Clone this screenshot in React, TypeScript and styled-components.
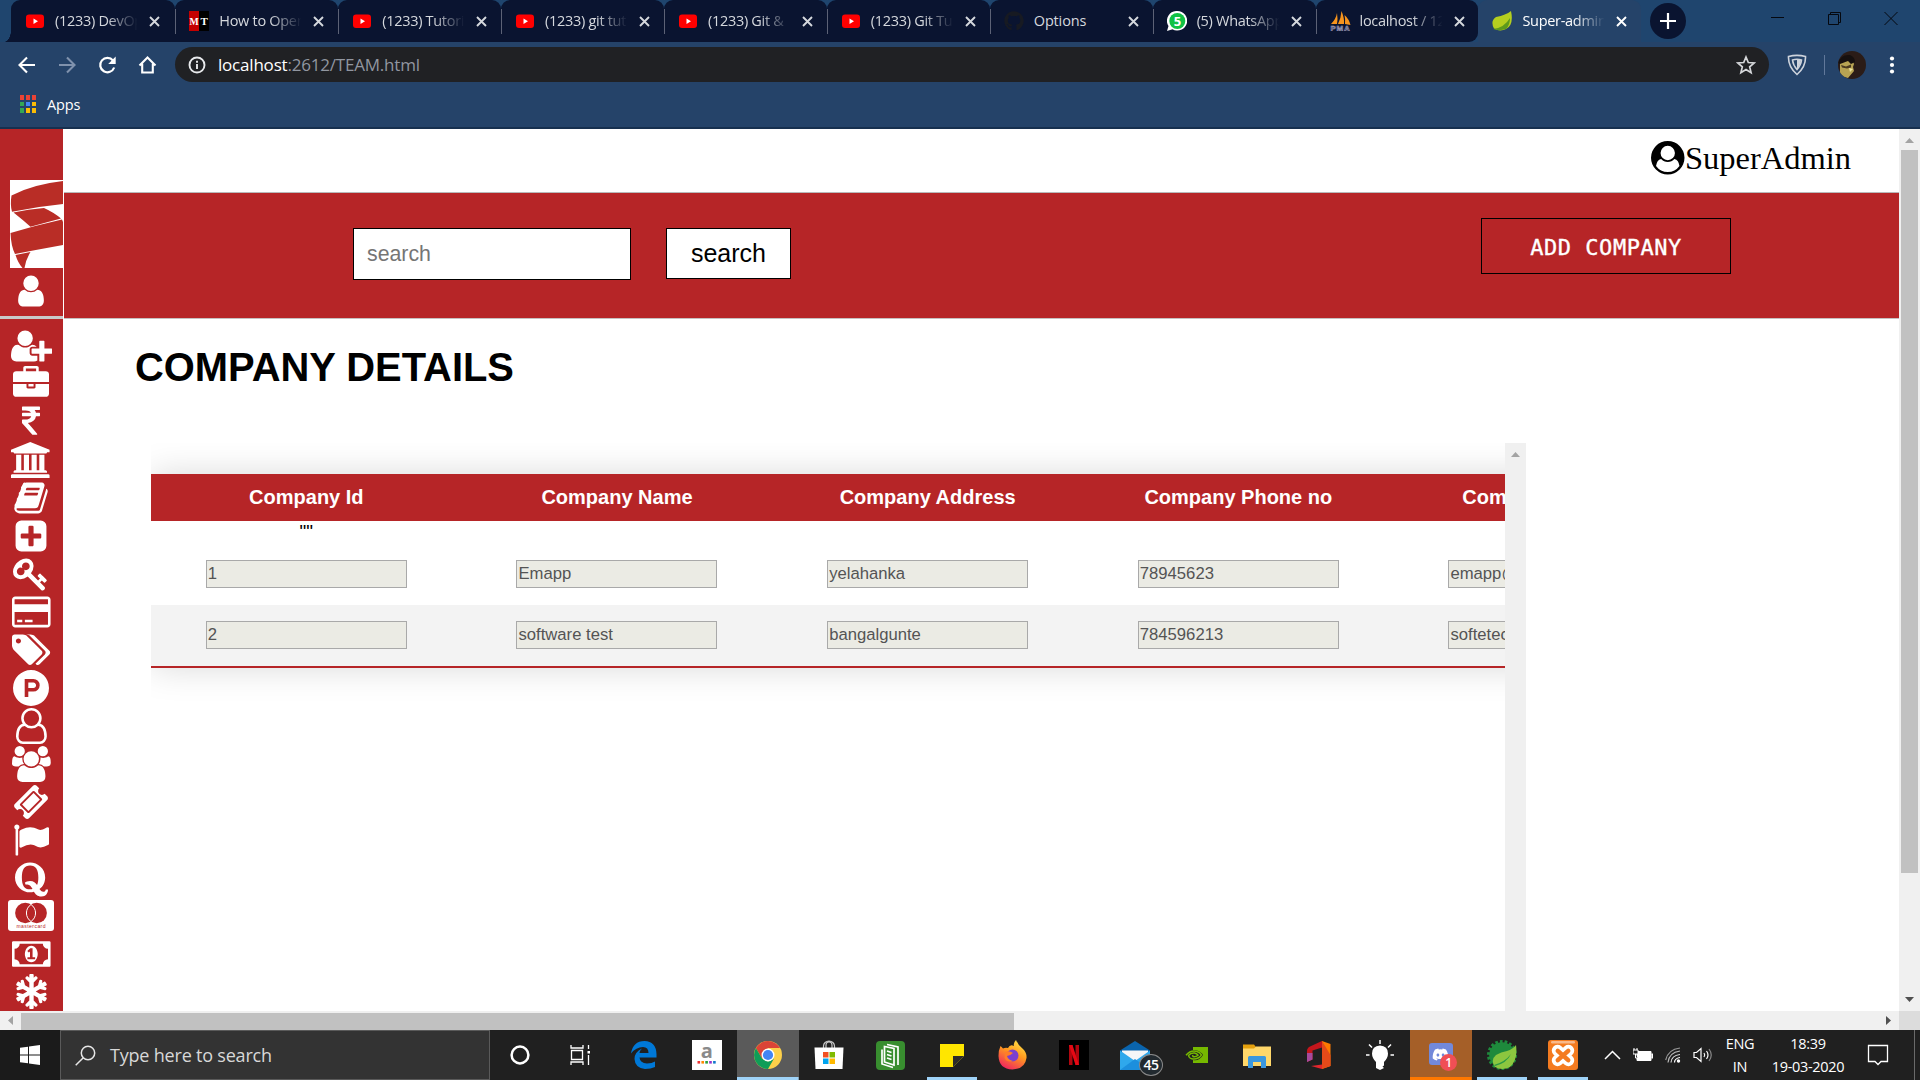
import React from 'react';
import styled, { createGlobalStyle } from 'styled-components';
import { FaQuora, FaSnowflake, FaGithub, FaDiscord } from 'react-icons/fa';

const RED = '#b62527';
const UI = '"Open Sans", "Noto Sans", sans-serif';
const ARIAL = '"Liberation Sans", Arial, sans-serif';

const Global = createGlobalStyle`
  * { box-sizing: border-box; }
  html, body { margin: 0; padding: 0; overflow: hidden; background: #fff; }
  svg { display: block; flex: none; }
`;

const Screen = styled.div`
  width: 1920px;
  height: 1080px;
  display: flex;
  flex-direction: column;
  overflow: hidden;
`;

/* ---------- browser chrome ---------- */
const TabStrip = styled.div`
  height: 42px;
  flex: none;
  display: flex;
  background: #1f456e;
  padding-left: 11px;
`;
const Tab = styled.div<{ $active?: boolean; $first?: boolean; $last?: boolean }>`
  width: ${p => (p.$first ? 164.3 : 162.9)}px;
  height: 42px;
  flex: none;
  display: flex;
  align-items: center;
  padding-left: 14px;
  position: relative;
  border-radius: ${p => (p.$last ? '9px 9px 9px 0' : '9px 9px 0 0')};
  background: ${p => (p.$active ? '#254369' : '#0a1430')};
  font: 14.5px ${UI};
  letter-spacing: -0.3px;
  color: ${p => (p.$active ? '#fff' : '#d5d8dd')};
  &::before {
    content: '';
    position: absolute;
    left: ${p => (p.$first ? '-7px' : '0')};
    bottom: ${p => (p.$first ? '0' : '8px')};
    width: ${p => (p.$first ? '7px' : p.$active ? '0' : '1px')};
    height: ${p => (p.$first ? '12px' : '25px')};
    background: ${p => (p.$first ? 'radial-gradient(ellipse at 0 0, transparent 0 68%, #0a1430 72%)' : '#5c6276')};
  }
`;
const Favicon = styled.span`
  width: 20px;
  height: 20px;
  margin-right: 10px;
  display: flex;
  align-items: center;
  flex: none;
`;
const TabLabel = styled.span`
  width: 86px;
  line-height: 20px;
  overflow: hidden;
  white-space: nowrap;
  mask-image: linear-gradient(to right, #000 60%, transparent 96%);
`;
const WideLabel = styled(TabLabel)`
  mask-image: none;
  letter-spacing: -0.15px;
`;
const CloseSlot = styled.span`
  margin-left: 8px;
`;
const NewTab = styled.div`
  width: 36px;
  height: 36px;
  margin: 3px 0 0 9px;
  border-radius: 50%;
  background: #0a1430;
  display: grid;
  place-items: center;
`;
const WindowButtons = styled.div`
  display: flex;
  margin-left: auto;
  padding: 9px 20px 0 0;
`;
const WindowButton = styled.div<{ $w: number }>`
  width: ${p => p.$w}px;
`;
const Toolbar = styled.div`
  height: 46px;
  flex: none;
  display: flex;
  align-items: center;
  background: #254369;
  padding: 0 0 1px 17px;
`;
const NavIcons = styled.div`
  width: 158px;
  display: flex;
  gap: 20px;
`;
const Omnibox = styled.div`
  width: 1594px;
  height: 35px;
  border-radius: 18px;
  background: #202124;
  display: flex;
  align-items: center;
  padding: 0 13px 0 13px;
  font: 17px ${UI};
  letter-spacing: -0.2px;
  color: #9196a0;
`;
const UrlText = styled.span`
  margin-left: 12px;
  flex: 1;
  line-height: 35px;
  b { font-weight: 400; color: #fff; }
`;
const ToolbarRight = styled.div`
  display: flex;
  align-items: center;
  padding-left: 18px;
`;
const Divider = styled.div`
  width: 1px;
  height: 20px;
  margin: 0 13px 0 17px;
  background: #61789a;
`;
const Bookmarks = styled.div`
  height: 41px;
  flex: none;
  display: flex;
  align-items: center;
  gap: 11px;
  padding: 0 0 7px 20px;
  background: #254369;
  border-bottom: 2px solid #17304f;
  font: 14.5px ${UI};
  letter-spacing: -0.15px;
  color: #fff;
`;
const AppGrid = styled.div`
  display: grid;
  grid-template-columns: repeat(3, 4px);
  gap: 2px;
`;
const Dot = styled.i<{ $c: string }>`
  height: 4.5px;
  background: ${p => p.$c};
`;

/* ---------- page ---------- */
const Viewport = styled.div`
  height: 882px;
  flex: none;
  display: flex;
  background: #fff;
  overflow: hidden;
`;
const Side = styled.div`
  width: 63px;
  flex: none;
  background: ${RED};
  display: flex;
  flex-direction: column;
  align-items: center;
`;
const LogoBox = styled.div`
  align-self: flex-end;
  margin: 51px 0 5px;
`;
const SideRule = styled.div`
  width: 63px;
  height: 3px;
  margin: 7px 0 9px;
  flex: none;
  background: #c9c9c9;
`;
const IconList = styled.div`
  display: flex;
  flex-direction: column;
  align-items: center;
  gap: 2px;
`;
const IconSlot = styled.div<{ $shift?: number }>`
  height: 36px;
  display: flex;
  justify-content: center;
  margin-right: ${p => p.$shift || 0}px;
  color: #fff;
`;
const Main = styled.div`
  flex: 1;
  min-width: 0;
  display: flex;
  flex-direction: column;
  padding-left: 1px;
`;
const UserBar = styled.div`
  height: 64px;
  flex: none;
  border-bottom: 1px solid #b9b9b9;
  display: flex;
  justify-content: flex-end;
  align-items: flex-start;
  padding: 11px 48px 0 0;
  font: 32.5px/36px "Liberation Serif", "Times New Roman", serif;
  color: #000;
  svg { margin-top: 1px; }
`;
const SearchBand = styled.div`
  height: 126px;
  flex: none;
  display: flex;
  align-items: flex-start;
  background: ${RED};
  border-bottom: 1px solid #c6c0c0;
  padding: 25px 168px 0 289px;
`;
const SearchInput = styled.input`
  width: 278px;
  height: 52px;
  margin-top: 10px;
  padding: 0 13px;
  border: 1px solid #000;
  background: #fff;
  font: 21.3px ${ARIAL};
  &::placeholder { color: #757575; }
`;
const SearchButton = styled.button`
  width: 125px;
  height: 51px;
  margin: 10px auto 0 35px;
  padding: 0;
  border: 1px solid #000;
  background: #fff;
  font: 25px ${ARIAL};
  color: #000;
`;
const AddButton = styled.button`
  width: 250px;
  height: 56px;
  padding: 2px 0 0;
  border: 1px solid #000;
  background: transparent;
  color: #fff;
  font: 22px "DejaVu Sans Mono", monospace;
  letter-spacing: 0.55px;
  -webkit-text-stroke: 0.35px #fff;
`;
const Title = styled.h1`
  margin: 25px 0 53px 71px;
  font: bold 39.9px/46px ${ARIAL};
  color: #000;
`;
const TableArea = styled.div`
  width: 1375px;
  flex: 1;
  margin-left: 87px;
  display: flex;
  min-height: 0;
`;
const TableClip = styled.div`
  width: 1354px;
  overflow: hidden;
  padding-top: 31px;
`;
const Table = styled.table`
  width: 1864px;
  table-layout: fixed;
  border-collapse: separate;
  border-spacing: 0;
  border-bottom: 2px solid ${RED};
  box-shadow: 0 0 33px rgba(0, 0, 0, 0.15);
  font-family: ${ARIAL};
`;
const Th = styled.th`
  height: 47px;
  padding: 0;
  background: ${RED};
  color: #fff;
  font-size: 20px;
`;
const Quote = styled.td`
  height: 22px;
  padding: 0;
  text-align: center;
  vertical-align: top;
  font: 19px/21px ${ARIAL};
`;
const Td = styled.td<{ $even: boolean }>`
  height: ${p => (p.$even ? 61 : 62)}px;
  padding: ${p => (p.$even ? 16 : 17)}px 0 0;
  vertical-align: top;
  background: ${p => (p.$even ? '#f3f3f3' : 'transparent')};
`;
const Field = styled.input`
  display: block;
  width: 201px;
  height: 28px;
  margin: 0 auto;
  padding: 0 1px;
  border: 1px solid #a9a9a9;
  background: #ebebe4;
  color: #545454;
  font: 16.67px ${ARIAL};
`;
const InnerScroll = styled.div`
  width: 21px;
  background: #f0f0f0;
  display: flex;
  justify-content: center;
  padding-top: 9px;
`;
const VScroll = styled.div`
  width: 21px;
  flex: none;
  background: #f0f0f0;
  display: flex;
  flex-direction: column;
  align-items: center;
  padding: 9px 0;
`;
const VThumb = styled.div`
  width: 17px;
  height: 723px;
  margin: 7px 0 auto;
  background: #c1c1c1;
`;
const HScroll = styled.div`
  height: 19px;
  flex: none;
  display: flex;
  align-items: center;
  background: #f0f0f0;
  padding-left: 8px;
`;
const HThumb = styled.div`
  width: 993px;
  height: 17px;
  margin: 2px auto 0 8px;
  background: #c1c1c1;
`;
const Corner = styled.div`
  width: 21px;
  height: 19px;
  margin-left: 8px;
  background: #dcdcdc;
`;
const Arrow = styled.i<{ $d: 'up' | 'down' | 'left' | 'right'; $c?: string }>`
  flex: none;
  width: ${p => (p.$d === 'up' || p.$d === 'down' ? 9 : 5)}px;
  height: ${p => (p.$d === 'up' || p.$d === 'down' ? 5 : 9)}px;
  background: ${p => p.$c || '#a3a3a3'};
  clip-path: ${p =>
    ({
      up: 'polygon(50% 0, 100% 100%, 0 100%)',
      down: 'polygon(0 0, 100% 0, 50% 100%)',
      left: 'polygon(100% 0, 100% 100%, 0 50%)',
      right: 'polygon(0 0, 100% 50%, 0 100%)',
    })[p.$d]};
`;

/* ---------- taskbar ---------- */
const Taskbar = styled.div`
  height: 50px;
  flex: none;
  display: flex;
  background: #202020;
  color: #fff;
  font-family: ${UI};
`;
const StartCell = styled.div`
  width: 60px;
  display: grid;
  place-items: center;
  background: #1b1b1b;
`;
const SearchBox = styled.div`
  width: 430px;
  display: flex;
  align-items: center;
  gap: 14px;
  padding-left: 14px;
  background: #333;
  border: 1px solid #5a5a5a;
  font-size: 18px;
  letter-spacing: -0.2px;
  color: #d8d8d8;
`;
const Cell = styled.div<{ $w?: number; $bg?: string; $line?: string; $inset?: number; $right?: number }>`
  width: ${p => p.$w || 61.2}px;
  margin-right: ${p => p.$right || 0}px;
  flex: none;
  display: grid;
  place-items: center;
  background-color: ${p => p.$bg || 'transparent'};
  background-image: ${p => (p.$line ? `linear-gradient(${p.$line}, ${p.$line})` : 'none')};
  background-repeat: no-repeat;
  background-position: center bottom;
  background-size: calc(100% - ${p => (p.$inset || 0) * 2}px) 3px;
`;
const BadgeHost = styled.div`
  position: relative;
  display: grid;
`;
const Badge = styled.span<{ $discord?: boolean }>`
  position: absolute;
  left: ${p => (p.$discord ? 11 : 19)}px;
  top: ${p => (p.$discord ? 11 : 13)}px;
  width: ${p => (p.$discord ? 17 : 24)}px;
  height: ${p => (p.$discord ? 17 : 22)}px;
  border-radius: 50%;
  border: ${p => (p.$discord ? 'none' : '1px solid #8b8b8b')};
  background: ${p => (p.$discord ? '#f04f55' : '#222a30')};
  display: grid;
  place-items: center;
  font-size: ${p => (p.$discord ? 12 : 14)}px;
  font-weight: 600;
  line-height: 1;
  letter-spacing: -0.4px;
`;
const Amazon = styled.div`
  width: 30px;
  height: 30px;
  background: #fff;
  color: #8a8a8a;
  display: flex;
  flex-direction: column;
  align-items: center;
  font: bold 20px/20px ${UI};
  padding-top: 1px;
`;
const Tray = styled.div`
  flex: 1;
  display: flex;
  align-items: center;
  padding-left: 10px;
`;
const TrayIcons = styled.div`
  width: 115px;
  display: flex;
  align-items: center;
  gap: 12px;
`;
const TrayText = styled.div<{ $w: number }>`
  width: ${p => p.$w}px;
  text-align: center;
  font-size: 14.5px;
  line-height: 23px;
  letter-spacing: -0.3px;
  white-space: nowrap;
`;
const Desktop = styled.div`
  margin-left: auto;
  width: 6px;
  height: 50px;
  border-left: 1px solid #6a6a6a;
`;

/* ---------- drawings ---------- */
const G = ({ d, w = 1792, x = 0, size = 36 }: { d: string; w?: number; x?: number; size?: number }) => (
  <svg height={size} width={(w / 1792) * size} viewBox={`${x} 0 ${w} 1792`} fill="currentColor">
    <path d={d} />
  </svg>
);

const P_USER = 'M1536 1399q0 109-62.5 187t-150.5 78h-854q-88 0-150.5-78t-62.5-187q0-85 8.5-160.5t31.5-152 58.5-131 94-89 134.5-34.5q131 128 313 128t313-128q76 0 134.5 34.5t94 89 58.5 131 31.5 152 8.5 160.5zm-256-887q0 159-112.5 271.5t-271.5 112.5-271.5-112.5-112.5-271.5 112.5-271.5 271.5-112.5 271.5 112.5 112.5 271.5z';
const P_CIRCLE_USER = 'M1523 1339q-22-155-87.5-257.5t-184.5-118.5q-67 74-159.5 115.5t-195.5 41.5-195.5-41.5-159.5-115.5q-119 16-184.5 118.5t-87.5 257.5q106 150 271 237.5t356 87.5 356-87.5 271-237.5zm-243-699q0-159-112.5-271.5t-271.5-112.5-271.5 112.5-112.5 271.5 112.5 271.5 271.5 112.5 271.5-112.5 112.5-271.5zm512 256q0 182-71 347.5t-190.5 286-285.5 191.5-349 71q-182 0-348-71t-286-191-191-286-71-348 71-348 191-286 286-191 348-71 348 71 286 191 191 286 71 348z';

type SideGlyph = { d: string; w?: number; x?: number; shift?: number };
const GLYPHS: SideGlyph[] = [
  { w: 2048, d: 'M704 896q-159 0-271.5-112.5t-112.5-271.5 112.5-271.5 271.5-112.5 271.5 112.5 112.5 271.5-112.5 271.5-271.5 112.5zm960 128h352q13 0 22.5 9.5t9.5 22.5v192q0 13-9.5 22.5t-22.5 9.5h-352v352q0 13-9.5 22.5t-22.5 9.5h-192q-13 0-22.5-9.5t-9.5-22.5v-352h-352q-13 0-22.5-9.5t-9.5-22.5v-192q0-13 9.5-22.5t22.5-9.5h352v-352q0-13 9.5-22.5t22.5-9.5h192q13 0 22.5 9.5t9.5 22.5v352zm-736 224q0 52 38 90t90 38h256v238q-68 50-171 50h-874q-121 0-194-69t-73-190q0-53 3.5-103.5t14-109 26.5-108.5 43-97.5 62-81 85.5-53.5 111.5-20q19 0 39 17 79 61 154.5 91.5t164.5 30.5 164.5-30.5 154.5-91.5q20-17 39-17 132 0 217 96h-223q-52 0-90 38t-38 90v192z' },
  { shift: 1, d: 'M640 256h512v-128h-512v128zm1152 640v480q0 66-47 113t-113 47h-1472q-66 0-113-47t-47-113v-480h672v160q0 26 19 45t45 19h320q26 0 45-19t19-45v-160h672zm-768 0v128h-256v-128h256zm768-480v384h-1792v-384q0-66 47-113t113-47h352v-160q0-40 28-68t68-28h576q40 0 68 28t28 68v160h352q66 0 113 47t47 113z' },
  { shift: 1, d: 'M1345 470v102q0 14-9 23t-23 9h-168q-23 144-129 234t-276 110q167 178 459 536 14 16 4 34-8 18-29 18h-195q-16 0-25-12-306-367-498-571-9-9-9-22v-127q0-13 9.5-22.5t22.5-9.5h112q132 0 212.5-43t102.5-125h-427q-14 0-23-9t-9-23v-102q0-14 9-23t23-9h413q-57-113-268-113h-145q-13 0-22.5-9.5t-9.5-22.5v-133q0-14 9-23t23-9h832q14 0 23 9t9 23v102q0 14-9 23t-23 9h-233q47 61 64 144h171q14 0 23 9t9 23z' },
  { w: 1920, x: -128, shift: 2, d: 'M832 0l960 384v128h-128q0 26-20.5 45t-48.5 19h-1526q-28 0-48.5-19t-20.5-45h-128v-128zm-704 640h256v768h128v-768h256v768h128v-768h256v768h128v-768h256v768h59q28 0 48.5 19t20.5 45v64h-1664v-64q0-26 20.5-45t48.5-19h59v-768zm1595 960q28 0 48.5 19t20.5 45v128h-1920v-128q0-26 20.5-45t48.5-19h1782z' },
  { shift: 1, d: 'M1703 478q40 57 18 129l-275 906q-19 64-76.5 107.5t-122.5 43.5h-923q-77 0-148.5-53.5t-99.5-131.5q-24-67-2-127 0-4 3-27t4-37q1-8-3-21.5t-3-19.5q2-11 8-21t16.5-23.5 16.5-23.5q23-38 45-91.5t30-91.5q3-10 .5-30t-.5-28q3-11 17-28t17-23q21-36 42-92t25-90q1-9-2.5-32t.5-28q4-13 22-30.5t22-22.5q19-26 42.5-84.5t27.5-96.5q1-8-3-25.5t-2-26.5q2-8 9-18t18-23 17-21q8-12 16.5-30.5t15-35 16-36 19.5-32 26.5-23.5 36-11.5 47.5 5.5l-1 3q38-9 51-9h761q74 0 114 56t18 130l-274 906q-36 119-71.5 153.5t-128.5 34.5h-869q-27 0-38 15-11 16-1 43 24 70 144 70h923q29 0 56-15.5t35-41.5l300-987q7-22 5-57 38 15 59 43zm-1064 2q-4 13 2 22.5t20 9.5h608q13 0 25.5-9.5t16.5-22.5l21-64q4-13-2-22.5t-20-9.5h-608q-13 0-25.5 9.5t-16.5 22.5zm-83 256q-4 13 2 22.5t20 9.5h608q13 0 25.5-9.5t16.5-22.5l21-64q4-13-2-22.5t-20-9.5h-608q-13 0-25.5 9.5t-16.5 22.5z' },
  { shift: 1, d: 'M1408 960v-128q0-26-19-45t-45-19h-320v-320q0-26-19-45t-45-19h-128q-26 0-45 19t-19 45v320h-320q-26 0-45 19t-19 45v128q0 26 19 45t45 19h320v320q0 26 19 45t45 19h128q26 0 45-19t19-45v-320h320q26 0 45-19t19-45zm256-544v960q0 119-84.5 203.5t-203.5 84.5h-960q-119 0-203.5-84.5t-84.5-203.5v-960q0-119 84.5-203.5t203.5-84.5h960q119 0 203.5 84.5t84.5 203.5z' },
  { shift: 1, d: 'M832 512q0-80-56-136t-136-56-136 56-56 136q0 42 19 83-41-19-83-19-80 0-136 56t-56 136 56 136 136 56 136-56 56-136q0-42-19-83 41 19 83 19 80 0 136-56t56-136zm851 704q0 17-49 66t-66 49q-9 0-28.5-16t-36.5-33-38.5-40-24.5-26l-96 96 220 220q28 28 28 68 0 42-39 81t-81 39q-40 0-68-28l-671-671q-176 131-365 131-163 0-265.5-102.5t-102.5-265.5q0-160 95-313t248-248 313-95q163 0 265.5 102.5t102.5 265.5q0 189-131 365l355 355 96-96q-3-3-26-24.5t-40-38.5-33-36.5-16-28.5q0-17 49-66t66-49q13 0 23 10 6 6 46 44.5t82 79.5 86.5 86 73 78 28.5 41z' },
  { w: 1920, d: 'M1760 128q66 0 113 47t47 113v1216q0 66-47 113t-113 47h-1600q-66 0-113-47t-47-113v-1216q0-66 47-113t113-47h1600zm-1600 128q-13 0-22.5 9.5t-9.5 22.5v224h1664v-224q0-13-9.5-22.5t-22.5-9.5h-1600zm1600 1280q13 0 22.5-9.5t9.5-22.5v-608h-1664v608q0 13 9.5 22.5t22.5 9.5h1600zm-1504-128v-128h256v128h-256zm384 0v-128h384v128h-384z' },
  { w: 1920, d: 'M448 448q0-53-37.5-90.5t-90.5-37.5-90.5 37.5-37.5 90.5 37.5 90.5 90.5 37.5 90.5-37.5 37.5-90.5zm1067 576q0 53-37 90l-491 492q-39 37-91 37-53 0-90-37l-715-716q-38-37-64.5-101t-26.5-117v-416q0-52 38-90t90-38h416q53 0 117 26.5t102 64.5l715 714q37 39 37 91zm384 0q0 53-37 90l-491 492q-39 37-91 37-36 0-59-14t-53-45l470-470q37-37 37-90 0-52-37-91l-715-714q-38-38-102-64.5t-117-26.5h224q53 0 117 26.5t102 64.5l715 714q37 39 37 91z' },
  { shift: 1, d: 'M1150 762q0 56-39.5 95t-95.5 39h-253v-269h253q56 0 95.5 39.5t39.5 95.5zm179 0q0-130-91.5-222t-222.5-92h-433v896h180v-269h253q130 0 222-91.5t92-221.5zm463 134q0 182-71 348t-191 286-286 191-348 71-348-71-286-191-191-286-71-348 71-348 191-286 286-191 348-71 348 71 286 191 191 286 71 348z' },
  { w: 1536, d: 'M1201 784q47 14 89.5 38t89 73 79.5 115.5 55 172 22 236.5q0 154-100 263.5t-241 109.5h-854q-141 0-241-109.5t-100-263.5q0-131 22-236.5t55-172 79.5-115.5 89-73 89.5-38q-79-125-79-272 0-104 40.5-198.5t109.5-163.5 163.5-109.5 198.5-40.5 198.5 40.5 163.5 109.5 109.5 163.5 40.5 198.5q0 147-79 272zm-433-656q-159 0-271.5 112.5t-112.5 271.5 112.5 271.5 271.5 112.5 271.5-112.5 112.5-271.5-112.5-271.5-271.5-112.5zm427 1536q88 0 150.5-71.5t62.5-173.5q0-239-78.5-377t-225.5-145q-145 127-336 127t-336-127q-147 7-225.5 145t-78.5 377q0 102 62.5 173.5t150.5 71.5h854z' },
  { w: 1920, d: 'M593 896q-162 5-265 128h-134q-82 0-138-40.5t-56-118.5q0-353 124-353 6 0 43.5 21t97.5 42.5 119 21.5q67 0 133-23-5 37-5 66 0 159 93 256zm1071 637q0 120-73 189.5t-194 69.5h-874q-121 0-194-69.5t-73-189.5q0-53 3.5-103.5t14-109 26.5-108.5 43-97.5 62-81 85.5-53.5 111.5-20q10 0 43 21.5t73 48 107 48 135 21.5 135-21.5 107-48 73-48 43-21.5q61 0 111.5 20t85.5 53.5 62 81 43 97.5 26.5 108.5 14 109 3.5 103.5zm-1024-1277q0 106-75 181t-181 75-181-75-75-181 75-181 181-75 181 75 75 181zm704 384q0 159-112.5 271.5t-271.5 112.5-271.5-112.5-112.5-271.5 112.5-271.5 271.5-112.5 271.5 112.5 112.5 271.5zm576 225q0 78-56 118.5t-138 40.5h-134q-103-123-265-128 93-97 93-256 0-29-5-66 66 23 133 23 59 0 119-21.5t97.5-42.5 43.5-21q124 0 124 353zm-128-609q0 106-75 181t-181 75-181-75-75-181 75-181 181-75 181 75 75 181z' },
  { shift: 1, d: 'M1024 452l316 316-572 572-316-316zm-211 979l618-618q19-19 19-45t-19-45l-362-362q-18-18-45-18t-45 18l-618 618q-19 19-19 45t19 45l362 362q18 18 45 18t45-18zm889-637l-907 908q-37 37-90.5 37t-90.5-37l-126-126q56-56 56-136t-56-136-136-56-136 56l-125-126q-37-37-37-90.5t37-90.5l907-906q37-37 90.5-37t90.5 37l125 125q-56 56-56 136t56 136 136 56 136-56l126 125q37 37 37 90.5t-37 90.5z' },
  { shift: 1, d: 'M320 256q0 72-64 110v1266q0 13-9.5 22.5t-22.5 9.5h-64q-13 0-22.5-9.5t-9.5-22.5v-1266q-64-38-64-110 0-53 37.5-90.5t90.5-37.5 90.5 37.5 37.5 90.5zm1472 64v763q0 25-12.5 38.5t-39.5 27.5q-215 116-369 116-61 0-123.5-22t-108.5-48-115.5-48-142.5-22q-192 0-464 146-17 9-33 9-26 0-45-19t-19-45v-742q0-32 31-55 21-14 79-43 236-120 421-120 107 0 200 29t219 88q38 19 88 19 54 0 117.5-21t110-47 88-47 54.5-21q26 0 45 19t19 45z' },
];
const MONEY = 'M768 1152h384v-96h-128v-448h-114l-148 137 77 80q42-37 55-57h2v288h-128v96zm512-256q0 70-21 142t-59.5 134-101.5 101-138 39-138-39-101.5-101-59.5-134-21-142 21-142 59.5-134 101.5-101 138-39 138 39 101.5 101 59.5 134 21 142zm512 256v-512q-106 0-181-75t-75-181h-1152q0 106-75 181t-181 75v512q106 0 181 75t75 181h1152q0-106 75-181t181-75zm128-832v1152q0 26-19 45t-45 19h-1792q-26 0-45-19t-19-45v-1152q0-26 19-45t45-19h1792q26 0 45 19t19 45z';

const Mastercard = () => (
  <svg width="46" height="36" viewBox="0 0 46 36">
    <rect y="2" width="46" height="31" rx="3" fill="#fff" />
    <circle cx="17.3" cy="15" r="10.2" fill={RED} />
    <circle cx="28.7" cy="15" r="10.2" fill={RED} />
    <path d="M23 6.500a10.200 10.200 0 0 1 0 17 10.200 10.200 0 0 1 0-17z" fill={RED} stroke="#fff" strokeWidth="1" />
    <text x="23" y="30.3" fontSize="5" fontFamily="Liberation Sans, sans-serif" fill={RED} textAnchor="middle" textLength="29">mastercard</text>
  </svg>
);

const Logo = () => (
  <svg width="53" height="88" viewBox="0 0 53 88">
    <rect width="53" height="88" fill="#fff" />
    <g fill="#b92d26">
      <path d="M1.500 15.500Q22 4.500 53 1V24Q28 26.500 2 31.700Q0 25 1.500 15.500z" />
      <path d="M3.500 32.500Q18 29 34 28Q44 32.500 51 38.500Q36 42.500 20.500 46.800Q13 40 3.500 32.500z" />
      <path d="M0.500 53Q25 45.500 52 39.500L53 42V65Q28 69.500 5 74Q1 66 0.500 53z" />
      <path d="M5.500 75L20.500 72Q16 79 14.500 88H12.500Q8 83 5.500 75z" />
    </g>
  </svg>
);

const YouTube = () => (
  <svg width="20" height="20" viewBox="0 0 20 20">
    <rect x="1" y="3.500" width="18" height="13.500" rx="3" fill="#f00" />
    <path d="M8.500 7.500l4.500 2.700-4.500 2.700z" fill="#fff" />
  </svg>
);
const MT = () => (
  <svg width="20" height="20" viewBox="0 0 20 20">
    <rect width="10" height="20" fill="#c40000" />
    <rect x="10" width="10" height="20" fill="#000" />
    <g fill="#fff" fontFamily="Liberation Serif, serif" fontWeight="bold" fontSize="11" textAnchor="middle">
      <text x="5" y="14" textLength="9" lengthAdjust="spacingAndGlyphs">M</text>
      <text x="15" y="14">T</text>
    </g>
  </svg>
);
const WhatsApp = () => (
  <svg width="20" height="20" viewBox="0 0 20 20">
    <path d="M10.300 0a9.800 9.800 0 1 1-4.800 18.300L0 20l1.500-5A9.800 9.800 0 0 1 10.300 0z" fill="#fff" />
    <circle cx="10.300" cy="10" r="8" fill="#10c143" />
    <text x="10.300" y="14.700" fill="#fff" fontSize="13" fontWeight="bold" fontFamily="Open Sans, sans-serif" textAnchor="middle">5</text>
  </svg>
);
const PhpMyAdmin = () => (
  <svg width="21" height="20" viewBox="0 0 21 20">
    <path d="M1 13Q6 8 7 2Q8 8 7 13zM8 13Q11 7 11.500 0Q14.500 7 14 13zM15 13Q15.500 8 14.500 4Q19 8 20.500 14z" fill="#f7941d" />
    <text x="10" y="20" fontSize="8" fontWeight="bold" fontFamily="Liberation Sans, sans-serif" textAnchor="middle" textLength="19" fill="#35355a" stroke="#a9a9c4" strokeWidth="0.5">PMA</text>
  </svg>
);
const Leaf = () => (
  <svg width="20" height="20" viewBox="0 0 20 20">
    <path d="M19 0Q22 14 14 18Q8 21 2 17.500Q-2 10 4 6Q14 4 19 0z" fill="#b5cf1f" />
    <path d="M1 18Q12 17 18 7Q18 14 14 18Q8 20 3 18.500z" fill="#5d9a1c" />
  </svg>
);
const Close = () => (
  <svg width="11" height="11" viewBox="0 0 11 11" stroke="currentColor" strokeWidth="1.900">
    <path d="M1 1l9 9M10 1l-9 9" />
  </svg>
);

const TABS: { icon: React.ReactNode; text: string; full?: boolean }[] = [
  { icon: <YouTube />, text: '(1233) DevOps' },
  { icon: <MT />, text: 'How to Open' },
  { icon: <YouTube />, text: '(1233) Tutoria' },
  { icon: <YouTube />, text: '(1233) git tut' },
  { icon: <YouTube />, text: '(1233) Git &' },
  { icon: <YouTube />, text: '(1233) Git Tu' },
  { icon: <FaGithub size={20} color="#171a22" />, text: 'Options', full: true },
  { icon: <WhatsApp />, text: '(5) WhatsApp' },
  { icon: <PhpMyAdmin />, text: 'localhost / 12' },
  { icon: <Leaf />, text: 'Super-admin' },
];

const Browser = () => (
  <>
    <TabStrip>
      {TABS.map((t, i) => (
        <Tab key={i} $first={i === 0} $last={i === 8} $active={i === 9}>
          <Favicon>{t.icon}</Favicon>
          {t.full ? <WideLabel>{t.text}</WideLabel> : <TabLabel>{t.text}</TabLabel>}
          <CloseSlot><Close /></CloseSlot>
        </Tab>
      ))}
      <NewTab>
        <svg width="16" height="16" viewBox="0 0 16 16" stroke="#fff" strokeWidth="2.200"><path d="M8 0v16M0 8h16" /></svg>
      </NewTab>
      <WindowButtons>
        <WindowButton $w={56}><svg width="20" height="20" viewBox="0 0 20 20" stroke="#05080f"><path d="M3 8.500h13" /></svg></WindowButton>
        <WindowButton $w={58}><svg width="18" height="20" viewBox="0 0 18 20" stroke="#05080f" fill="none"><path d="M4.500 5.500h10v10h-10zM6.500 5.500v-2h10v10h-2" /></svg></WindowButton>
        <WindowButton $w={18}><svg width="18" height="20" viewBox="0 0 18 20" stroke="#05080f"><path d="M2.500 3l13 13M15.500 3l-13 13" /></svg></WindowButton>
      </WindowButtons>
    </TabStrip>
    <Toolbar>
      <NavIcons>
        {[
          ['#fff', 'M18 10H3M10 2.500L2.500 10L10 17.500'],
          ['#8092ad', 'M2 10H17M10 2.500L17.500 10L10 17.500'],
        ].map(([c, d]) => (
          <svg key={c} width="20" height="20" viewBox="0 0 20 20" fill="none" stroke={c} strokeWidth="2.100"><path d={d} /></svg>
        ))}
        <svg width="20" height="20" viewBox="0 0 20 20" fill="none" stroke="#fff" strokeWidth="2.200">
          <path d="M17.200 12.500A7.200 7.200 0 1 1 16 5.500" /><path d="M18.700 1.500v7.500h-7.500z" fill="#fff" stroke="none" />
        </svg>
        <svg width="20" height="20" viewBox="0 0 20 20" fill="none" stroke="#fff" strokeWidth="2.100"><path d="M2.500 10.500L10.500 2.500L18.500 10.500M5.200 8.800V17.500H15.800V8.800" /></svg>
      </NavIcons>
      <Omnibox>
        <svg width="18" height="18" viewBox="0 0 18 18" fill="none" stroke="#e8eaed" strokeWidth="1.900"><circle cx="9" cy="9" r="7.500" /><path d="M9 8v5M9 4.700v2" /></svg>
        <UrlText><b>localhost</b>:2612/TEAM.html</UrlText>
        <svg width="20" height="20" viewBox="0 0 20 20" fill="none" stroke="#d5d7da" strokeWidth="1.700"><path d="M10 2l2.300 5.500 5.900.5-4.500 3.900 1.400 5.800L10 14.600l-5.100 3.100 1.400-5.800L1.800 8l5.900-.5z" /></svg>
      </Omnibox>
      <ToolbarRight>
        <svg width="20" height="22" viewBox="0 0 20 22" fill="none" stroke="#cdd3dc" strokeWidth="1.600">
          <path d="M1.500 2.500Q10 .3 18.500 2.500Q19 13 10 20.500Q1 13 1.500 2.500z" /><path d="M5.500 6Q10 4.500 14.500 6Q14 11 10 15.500Q6 11 5.500 6z" /><path d="M10 5.500V15Q13.500 11 14 6z" fill="#cdd3dc" stroke="none" />
        </svg>
        <Divider />
        <svg width="28" height="28" viewBox="0 0 28 28">
          <defs><clipPath id="av"><circle cx="14" cy="14" r="14" /></clipPath></defs>
          <g clipPath="url(#av)">
            <rect width="28" height="28" fill="#2b1c17" />
            <path d="M2 12Q6 6 14 8L16 13L15 16L16 20L10 27L2 25z" fill="#b7a353" />
            <path d="M0 12Q3 3 12 4Q17 6 17 11L13 13L10 10L2 13z" fill="#16100f" />
            <path d="M3 14l5 1.500 5-2v3l-4 1-5-1z" fill="#4a3a20" />
            <path d="M11 17l4 1-3 3z" fill="#efe7a0" />
          </g>
        </svg>
        <svg width="50" height="18" viewBox="0 0 50 18" fill="#fff"><circle cx="26" cy="2.500" r="2.100" /><circle cx="26" cy="9" r="2.100" /><circle cx="26" cy="15.500" r="2.100" /></svg>
      </ToolbarRight>
    </Toolbar>
    <Bookmarks>
      <AppGrid>
        {['#ea4335', '#ea4335', '#ea4335', '#34a853', '#4285f4', '#fbbc05', '#34a853', '#fbbc05', '#fbbc05'].map((c, i) => <Dot key={i} $c={c} />)}
      </AppGrid>
      <span>Apps</span>
    </Bookmarks>
  </>
);

const HEADERS = ['Company Id', 'Company Name', 'Company Address', 'Company Phone no', 'Company Email Id', 'Actions'];
const ROWS = [
  ['1', 'Emapp', 'yelahanka', '78945623', 'emapp@gmail.com', ''],
  ['2', 'software test', 'bangalgunte', '784596213', 'softetech@gmail.com', ''],
];

const Page = () => (
  <>
    <Viewport>
      <Side>
        <LogoBox><Logo /></LogoBox>
        <IconSlot $shift={1}><G d={P_USER} /></IconSlot>
        <SideRule />
        <IconList>
          {GLYPHS.map((g, i) => (
            <IconSlot key={i} $shift={g.shift}><G d={g.d} w={g.w} x={g.x} /></IconSlot>
          ))}
          <IconSlot><FaQuora size={39} /></IconSlot>
          <IconSlot $shift={1}><Mastercard /></IconSlot>
          <IconSlot><G d={MONEY} w={1920} /></IconSlot>
          <IconSlot><FaSnowflake size={35} /></IconSlot>
        </IconList>
      </Side>
      <Main>
        <UserBar><G d={P_CIRCLE_USER} size={33.5} />SuperAdmin</UserBar>
        <SearchBand>
          <SearchInput placeholder="search" />
          <SearchButton>search</SearchButton>
          <AddButton>ADD COMPANY</AddButton>
        </SearchBand>
        <Title>COMPANY DETAILS</Title>
        <TableArea>
          <TableClip>
            <Table>
              <thead><tr>{HEADERS.map(h => <Th key={h}>{h}</Th>)}</tr></thead>
              <tbody>
                <tr><Quote>""</Quote></tr>
                {ROWS.map((r, i) => (
                  <tr key={i}>{r.map((v, j) => <Td key={j} $even={i === 1}><Field value={v} readOnly /></Td>)}</tr>
                ))}
              </tbody>
            </Table>
          </TableClip>
          <InnerScroll><Arrow $d="up" /></InnerScroll>
        </TableArea>
      </Main>
      <VScroll><Arrow $d="up" /><VThumb /><Arrow $d="down" $c="#505050" /></VScroll>
    </Viewport>
    <HScroll>
      <Arrow $d="left" />
      <HThumb />
      <Arrow $d="right" $c="#505050" />
      <Corner />
    </HScroll>
  </>
);

const BLUE = '#9fd3f8';

const Bottom = () => (
  <Taskbar>
    <StartCell>
      <svg width="20" height="20" viewBox="0 0 20 20" fill="#fff"><path d="M0 2.800L8 1.700V9.500H0zM9 1.500L20 0v9.500H9zM0 10.500h8v7.800L0 17.200zM9 10.500h11V20L9 18.500z" /></svg>
    </StartCell>
    <SearchBox>
      <svg width="21" height="21" viewBox="0 0 21 21" fill="none" stroke="#e6e6e6" strokeWidth="1.500"><circle cx="13" cy="8" r="6.700" /><path d="M8.300 12.700L.7 20.300" /></svg>
      Type here to search
    </SearchBox>
    <Cell $w={60}><svg width="20" height="20" viewBox="0 0 20 20" fill="none" stroke="#fff" strokeWidth="2.500"><circle cx="10" cy="10" r="8.400" /></svg></Cell>
    <Cell $w={61} $right={2}>
      <svg width="22" height="20" viewBox="0 0 22 20" fill="none" stroke="#fff" strokeWidth="1.300"><path d="M1.500 5.500h11v9h-11zM1 0v3h12V0M1 20v-3h12v3M18.500 0v4M18.500 10v10" /><rect x="17.500" y="6" width="2.500" height="2.500" fill="#fff" stroke="none" /></svg>
    </Cell>
    <Cell $right={2}>
      <svg width="26" height="28" viewBox="0 0 26 28" fill="#0078d7"><path d="M0 12.500Q2 0 13.500 0Q25 .5 25.500 13v3.500H8.500Q9 22 16 22.500Q21 22.500 24 20.500V26Q20 28 14 28Q4 27 3.500 18Q3.500 11 11 7.500Q8.800 9.500 8.500 12H17.500Q17.500 6 12 6Q5 6 0 12.500z" /></svg>
    </Cell>
    <Cell>
      <Amazon>a
        <svg width="20" height="4" viewBox="0 0 20 4">{['#e33', '#f80', '#2a9d3f', '#93c', '#17c'].map((c, i) => <rect key={c} x={i * 3.9 + 0.5} y="0" width="2.600" height="2.600" fill={c} />)}</svg>
      </Amazon>
    </Cell>
    <Cell $bg="#5a5a5a" $line={BLUE}>
      <svg width="28" height="28" viewBox="0 0 28 28">
        <circle cx="14" cy="14" r="14" fill="#fdd04a" />
        <path d="M1.900 7A14 14 0 0 1 26.100 7H14L8 17.500z" fill="#db4437" />
        <path d="M1.900 7A14 14 0 0 0 14 28L20 17.500L14 20.500L8 17.500z" fill="#0f9d58" />
        <circle cx="14" cy="14" r="6.500" fill="#fff" /><circle cx="14" cy="14" r="5.100" fill="#4285f4" />
      </svg>
    </Cell>
    <Cell>
      <svg width="30" height="30" viewBox="0 0 30 30"><path d="M9.500 8V6a5.500 5 0 0 1 11 0v2M12 8V5.500a3 3.500 0 0 1 6 0V8" fill="none" stroke="#c9c9c9" strokeWidth="1.200" /><path d="M0.500 7.500h29L28.500 29H1.500z" fill="#fff" /><path d="M9 12h5.500v5.500H9z" fill="#f25022" /><path d="M15.500 12H21v5.500h-5.500z" fill="#7fba00" /><path d="M9 18.500h5.500V24H9z" fill="#00a4ef" /><path d="M15.500 18.500H21V24h-5.500z" fill="#ffb900" /></svg>
    </Cell>
    <Cell>
      <svg width="29" height="29" viewBox="0 0 29 29"><rect width="29" height="29" rx="4" fill="#388e2f" /><g fill="none" stroke="#fff" strokeWidth="1.700"><path d="M6 8.500v14.500l11 3.500M8.500 5.500v15.500L18 24V7.500zM11 3.500l11 2.500V24" /><path d="M11 10l4.500 1.500M11 13.500l4.500 1.500M11 17l4.500 1.500" /></g></svg>
    </Cell>
    <Cell $line={BLUE} $inset={5.5}>
      <svg width="24" height="24" viewBox="0 0 24 24"><path d="M0 1h24v12L13 24H0z" fill="#ffe600" /><path d="M13 24V13h11z" fill="#2b2b2b" /></svg>
    </Cell>
    <Cell>
      <svg width="29" height="30" viewBox="0 0 29 30">
        <defs><linearGradient id="ff" x1="0.800" y1="0" x2="0.300" y2="1"><stop offset="0" stopColor="#ffe94a" /><stop offset="0.450" stopColor="#ff9a1f" /><stop offset="1" stopColor="#f0245f" /></linearGradient></defs>
        <path d="M2.500 6Q4 7 5 8.500Q7 7.500 10 8Q12 4 16 6Q15 3 18 0Q20 5 25 9Q29 13 28.500 18Q27 29 14.500 29.500Q1 29 .5 16Q.5 10 2.500 6z" fill="url(#ff)" />
        <circle cx="14.500" cy="15.500" r="6" fill="#7a3fd0" /><path d="M7 12Q11 10 15 13Q12 16 9 16Q10 20 15 21Q9 23 6.500 18z" fill="#ff7d28" />
      </svg>
    </Cell>
    <Cell>
      <svg width="30" height="30" viewBox="0 0 30 30"><rect width="30" height="30" fill="#000" /><path d="M10 5v20h3.500V5zM16.500 5v20H20V5z" fill="#b1060f" /><path d="M10 5h3.500L20 25h-3.500z" fill="#e50914" /></svg>
    </Cell>
    <Cell>
      <BadgeHost>
        <svg width="30" height="29" viewBox="0 0 30 29"><path d="M0 9.500L15 0l15 9.500V29H0z" fill="#0a64ad" /><path d="M2 9.500h26V20H2z" fill="#f4f6f8" /><path d="M0 9.500L15 20L30 9.500V29H0z" fill="#2fa8ec" /><path d="M0 29L15 18L30 29z" fill="#1c8fdd" /></svg>
        <Badge>45</Badge>
      </BadgeHost>
    </Cell>
    <Cell><svg width="23" height="16" viewBox="0 0 23 16"><path d="M8 0h15v16H8z" fill="#76b900" /><path d="M0 8.500Q5 1 12 3.500Q17 5.500 18 8Q14 14.500 8 13Q2.500 12 0 8.500z" fill="#202020" /><path d="M1 8.200Q6 2.500 12 4.500Q15 5.500 16.500 8Q13 12.500 8 12Q4 11.500 3.500 8.500Q6 5.500 9.500 6Q12 6.500 13 8.200Q10.500 10.500 8 9.500L7.500 8" fill="none" stroke="#76b900" strokeWidth="1.500" /></svg></Cell>
    <Cell>
      <svg width="28" height="25" viewBox="0 0 28 25"><path d="M0 1.500h11l2 2.500v4H0z" fill="#e5a00d" /><path d="M0 5.500h11l2-2H28V23H0z" fill="#ffd76a" /><path d="M5 25V14.500Q5 13 6.500 13h15Q23 13 23 14.500V25h-5v-6h-8v6z" fill="#3b97de" /></svg>
    </Cell>
    <Cell>
      <svg width="24" height="28" viewBox="0 0 24 28"><path d="M15 0L23.500 3v22L15 28z" fill="#ff7a00" /><path d="M15 0v28l8.500-3V14z" fill="#e64a19" /><path d="M15 0L3 5.500Q0 7 0 10v11L5.500 18.500V9.500L15 6.500z" fill="#c4161c" /><path d="M0 21V12h5.500v6.500z" fill="#a64a9c" /><path d="M4 25l11-1.500V28z" fill="#e3262d" /></svg>
    </Cell>
    <Cell>
      <svg width="28" height="30" viewBox="0 0 28 30" fill="#fff"><path d="M14 5.500Q22 6 22 13.500Q22 18 18 22v3.500l-1.500 1L18 28l-4 2-4-2V22Q6 18 6 13.500Q6 6 14 5.500z" /><path d="M14 0v4M3 4.500l3 3M25 4.500l-3 3M0 15h3.500M24.500 15H28" stroke="#fff" strokeWidth="1.500" /></svg>
    </Cell>
    <Cell $bg="#a55f28" $line="#ff7800">
      <BadgeHost>
        <svg width="24" height="24" viewBox="0 0 24 24"><rect width="24" height="22" rx="3" fill="#7289da" /><g transform="translate(3 3)"><FaDiscord size={17} color="#fff" /></g></svg>
        <Badge $discord>1</Badge>
      </BadgeHost>
    </Cell>
    <Cell $line={BLUE} $inset={5.5}>
      <svg width="30" height="30" viewBox="0 0 30 30"><circle cx="15" cy="15" r="13.500" fill="none" stroke="#1e8a3c" strokeWidth="3" strokeDasharray="2.700 2" /><circle cx="15" cy="15" r="12.800" fill="#1e8a3c" /><path d="M29 5Q31 20 23 27Q15 31 8 27Q3 20 9 15Q14 12 20 11Q26 9 29 5z" fill="#8cc63f" /><path d="M7 25Q18 22 24 14Q20 23 8 26z" fill="#2b9a45" /></svg>
    </Cell>
    <Cell $line={BLUE} $inset={5.5}>
      <svg width="30" height="30" viewBox="0 0 30 30">
        <rect width="30" height="30" rx="3" fill="#f47b20" /><rect x="3" y="1" width="24" height="2.500" rx="1.200" fill="#f9b98a" />
        <g fill="none" strokeLinecap="round"><path d="M9.500 10.500L20.500 20.500M20.500 10.500L9.500 20.500" stroke="#fff" strokeWidth="11.500" /><path d="M9.800 10.800L20.200 20.200M20.200 10.800L9.800 20.200" stroke="#f47b20" strokeWidth="4.500" /></g>
      </svg>
    </Cell>
    <Tray>
      <TrayIcons>
        <svg width="17" height="10" viewBox="0 0 17 10" fill="none" stroke="#fff" strokeWidth="1.500"><path d="M1 9l7.500-7.500L16 9" /></svg>
        <svg width="20" height="14" viewBox="0 0 20 14"><path d="M4 3.500h14v9H4zM18.500 6H20v4h-1.500" fill="#fff" stroke="#fff" /><path d="M0 2h5v4H0zM1 0v2M4 0v2M2.500 6v4h2" fill="#202020" stroke="#fff" /></svg>
        <svg width="16" height="16" viewBox="0 0 16 16" fill="none" stroke="#fff" strokeWidth="1.200"><path d="M9.500 15.500Q9.500 11.500 15 10.500" /><path d="M6 15.500Q6.500 8.500 15 7.500" stroke="#ddd" /><path d="M3 15.500Q4 5.500 15 4" stroke="#bbb" /><path d="M.7 13Q3 2.500 15 1" stroke="#999" /><circle cx="13.500" cy="14" r="1.700" fill="#fff" stroke="none" /></svg>
        <svg width="20" height="16" viewBox="0 0 20 16" fill="none" stroke="#fff" strokeWidth="1.200"><path d="M1 5.500h2.500L8 1.500v13l-4.500-4H1z" /><path d="M11 6q1.500 2 0 4M13.500 4q3 4 0 8" /><path d="M16 2q4.500 6 0 12" stroke="#888" /></svg>
      </TrayIcons>
      <TrayText $w={42}>ENG<br />IN</TrayText>
      <TrayText $w={94}>18:39<br />19-03-2020</TrayText>
      <svg width="42" height="22" viewBox="0 0 42 22" fill="none" stroke="#fff" strokeWidth="1.300"><path d="M13.500 1.500h19v16h-6.500l-3 3-3-3h-6.500z" /></svg>
      <Desktop />
    </Tray>
  </Taskbar>
);

export default function App() {
  return (
    <Screen>
      <Global />
      <Browser />
      <Page />
      <Bottom />
    </Screen>
  );
}
